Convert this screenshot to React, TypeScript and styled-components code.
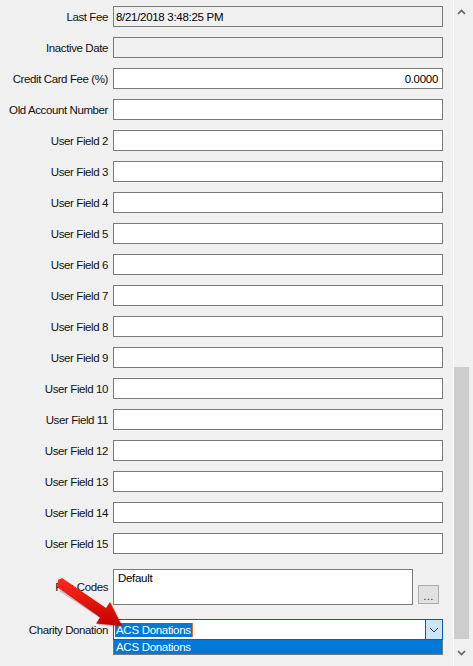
import React from "react";
import styled, { createGlobalStyle } from "styled-components";

const Global = createGlobalStyle`
  html, body { margin: 0; padding: 0; background: #f0f0f0; }
  body { font-family: "Liberation Sans", Arial, sans-serif; font-size: 11.5px; color: #000; }
`;

const Window = styled.div`
  position: relative;
  display: flex;
  width: 473px;
  height: 666px;
  overflow: hidden;
  background: #f0f0f0;
`;

const Form = styled.div`
  flex: 0 0 453px;
  display: flex;
  flex-direction: column;
  padding-top: 6px;
  box-sizing: border-box;
`;

const Row = styled.div<{ $top?: number; $cols?: string; $h?: number }>`
  display: grid;
  grid-template-columns: ${(p) => p.$cols ?? "108px 330px"};
  column-gap: 5px;
  align-items: center;
  height: ${(p) => p.$h ?? 21}px;
  margin-top: ${(p) => p.$top ?? 10}px;
  &:first-child { margin-top: 0; }
`;

const Label = styled.div`
  text-align: right;
  white-space: nowrap;
  letter-spacing: -0.4px;
  color: #111;
`;

const Field = styled.div<{ $readOnly?: boolean; $right?: boolean }>`
  box-sizing: border-box;
  height: 21px;
  border: 1px solid #7a7a7a;
  background: ${(p) => (p.$readOnly ? "#f0f0f0" : "#ffffff")};
  padding: 0 4px 0 2px;
  display: flex;
  align-items: center;
  justify-content: ${(p) => (p.$right ? "flex-end" : "flex-start")};
  white-space: nowrap;
  letter-spacing: -0.3px;
`;

const TextArea = styled.div`
  box-sizing: border-box;
  height: 36px;
  border: 1px solid #7a7a7a;
  background: #fff;
  padding: 2px 4px;
  letter-spacing: -0.3px;
`;

const DotsButton = styled.div`
  align-self: end;
  box-sizing: border-box;
  width: 21px;
  height: 19px;
  margin-bottom: 1px;
  border: 1px solid #adadad;
  background: #e1e1e1;
  color: #1a1a6e;
  display: flex;
  align-items: center;
  justify-content: center;
  font-size: 11px;
  padding-top: 3px;
  letter-spacing: 0.5px;
`;

const ComboWrap = styled.div`
  position: relative;
  height: 21px;
`;

const Combo = styled.div`
  box-sizing: border-box;
  height: 21px;
  border: 1px solid #0a5ea8;
  background: #fff;
  display: flex;
  align-items: stretch;
`;

const ComboText = styled.div`
  flex: 1;
  display: flex;
  align-items: center;
  padding-left: 1px;
  letter-spacing: -0.3px;
`;

const Selected = styled.span`
  background: #0078d7;
  color: #fff;
  padding: 1px;
  border-right: 1px solid #e8702a;
`;

const ComboButton = styled.div`
  width: 16px;
  border-left: 1px solid #0a5ea8;
  background: #cce4f7;
  display: flex;
  align-items: center;
  justify-content: center;
`;

const DropList = styled.div`
  position: absolute;
  left: 0;
  right: 0;
  top: 21px;
  box-sizing: border-box;
  height: 15px;
  border: 1px solid #7a7a7a;
  border-top: none;
  background: #0078d7;
  color: #fff;
  padding-left: 2px;
  display: flex;
  align-items: center;
  letter-spacing: -0.3px;
`;

const ScrollBar = styled.div`
  flex: 0 0 19px;
  border-left: 1px solid #ffffff;
  display: flex;
  flex-direction: column;
  background: #f0f0f0;
`;

const ScrollArrow = styled.div<{ $h: number }>`
  width: 15px;
  height: ${(p) => p.$h}px;
  display: flex;
  align-items: center;
  justify-content: center;
`;

const Track = styled.div`
  flex: 1;
  display: flex;
  flex-direction: column;
  justify-content: flex-end;
`;

const Thumb = styled.div`
  width: 15px;
  height: 272px;
  background: #cdcdcd;
`;

const ArrowOverlay = styled.svg`
  position: absolute;
  left: 0;
  top: 0;
  pointer-events: none;
`;

const Chevron = ({ up, color = "#606060" }: { up?: boolean; color?: string }) => (
  <svg width="9" height="6" viewBox="0 0 9 6">
    <path
      d={up ? "M1 5 L4.5 1.5 L8 5" : "M1 1 L4.5 4.5 L8 1"}
      fill="none"
      stroke={color}
      strokeWidth="1.6"
    />
  </svg>
);

const SmallChevron = () => (
  <svg width="10" height="6" viewBox="0 0 10 6">
    <path d="M1 1 L5 5 L9 1" fill="none" stroke="#404040" strokeWidth="1" />
  </svg>
);

const userFields = Array.from({ length: 14 }, (_, i) => `User Field ${i + 2}`);

export default function App() {
  return (
    <>
      <Global />
      <Window>
        <Form>
          <Row>
            <Label>Last Fee</Label>
            <Field $readOnly>8/21/2018 3:48:25 PM</Field>
          </Row>
          <Row>
            <Label>Inactive Date</Label>
            <Field $readOnly />
          </Row>
          <Row>
            <Label>Credit Card Fee (%)</Label>
            <Field $right>0.0000</Field>
          </Row>
          <Row>
            <Label>Old Account Number</Label>
            <Field />
          </Row>
          {userFields.map((f) => (
            <Row key={f}>
              <Label>{f}</Label>
              <Field />
            </Row>
          ))}
          <Row $top={15} $h={36} $cols="108px 300px 21px">
            <Label>Fee Codes</Label>
            <TextArea>Default</TextArea>
            <DotsButton>...</DotsButton>
          </Row>
          <Row $top={14}>
            <Label>Charity Donation</Label>
            <ComboWrap>
              <Combo>
                <ComboText>
                  <Selected>ACS Donations</Selected>
                </ComboText>
                <ComboButton>
                  <SmallChevron />
                </ComboButton>
              </Combo>
              <DropList>ACS Donations</DropList>
            </ComboWrap>
          </Row>
        </Form>
        <ScrollBar>
          <ScrollArrow $h={24}>
            <Chevron up />
          </ScrollArrow>
          <Track>
            <Thumb />
          </Track>
          <ScrollArrow $h={27}>
            <Chevron />
          </ScrollArrow>
        </ScrollBar>
        <ArrowOverlay width="473" height="666" viewBox="0 0 473 666">
          <defs>
            <linearGradient id="redg" x1="0" y1="0" x2="0" y2="1">
              <stop offset="0" stopColor="#ff2a1a" />
              <stop offset="1" stopColor="#c40000" />
            </linearGradient>
          </defs>
          <polygon
            points="58,590 59.5,580 63,578.5 106,608 110,602 122,626 96,623.5 100,617.5"
            fill="#7a2a2a"
            opacity="0.25"
            transform="translate(1.5,1.5)"
          />
          <polygon
            points="57,587 58,580 62,578 106,608 110,602 122,626 96,623.5 100,617.5"
            fill="url(#redg)"
          />
        </ArrowOverlay>
      </Window>
    </>
  );
}
